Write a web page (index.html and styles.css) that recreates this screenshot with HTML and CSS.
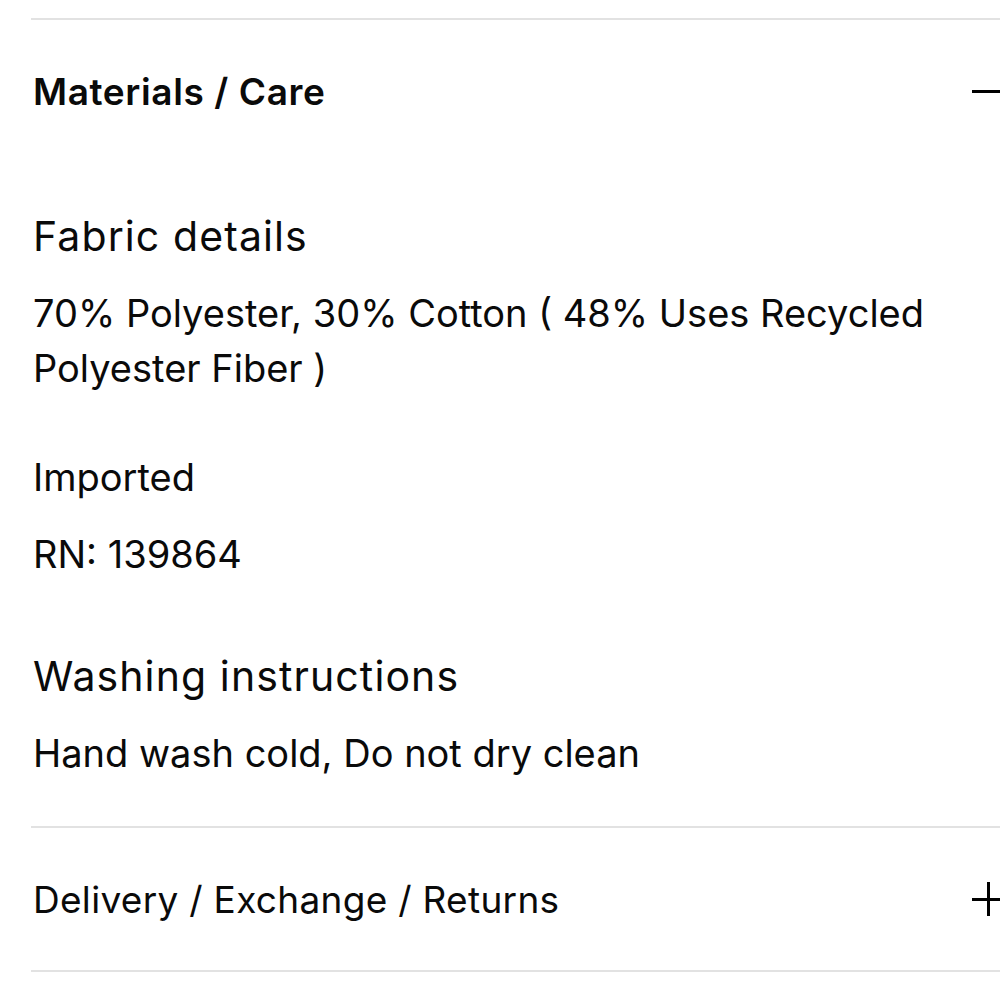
FILE: index.html
```html
<!DOCTYPE html>
<html lang="en">
<head>
<meta charset="utf-8">
<link rel="stylesheet" href="styles.css">
</head>
<body>
<div class="accordion">
  <section class="item open">
    <div class="item-head">
      <h2 class="item-title strong">Materials / Care</h2>
      <span class="toggle minus" aria-hidden="true"></span>
    </div>
    <div class="item-body">
      <h3 class="sub">Fabric details</h3>
      <p class="txt">70% Polyester, 30% Cotton ( 48% Uses Recycled Polyester Fiber )</p>
      <p class="txt gap">Imported</p>
      <p class="txt">RN: 139864</p>
      <h3 class="sub sub2">Washing instructions</h3>
      <p class="txt">Hand wash cold, Do not dry clean</p>
    </div>
  </section>
  <section class="item">
    <div class="item-head">
      <h2 class="item-title">Delivery / Exchange / Returns</h2>
      <span class="toggle plus" aria-hidden="true"></span>
    </div>
  </section>
</div>
</body>
</html>
```
FILE: styles.css
```css
* { box-sizing: border-box; }
html, body { margin: 0; padding: 0; background: #fff; }
body {
  font-family: Inter, "Noto Sans", sans-serif;
  color: #0a0a0a;
  width: 1000px;
  overflow: hidden;
}
.accordion {
  margin-left: 31px;
  padding-top: 18px;
}
.item {
  border-top: 2px solid #e2e2e2;
}
.item:last-child { border-bottom: 2px solid #e2e2e2; }
.item-head {
  display: flex;
  align-items: center;
  justify-content: space-between;
  height: 142px;
  padding-left: 2px;
}
.open .item-head { height: 142px; }
.item-title {
  margin: 0;
  font-size: 37px;
  font-weight: 400;
  letter-spacing: 0.3px;
}
.item-title.strong { font-size: 37px; font-weight: 600; letter-spacing: 0.6px; }
.toggle {
  position: relative;
  width: 34px;
  height: 34px;
  margin-right: -6px;
  flex: none;
}
.toggle::before, .toggle::after {
  content: "";
  position: absolute;
  background: #000;
}
.toggle::before { left: 0; right: 0; top: 16px; height: 3px; }
.plus::after { top: 0; bottom: 0; left: 15px; width: 3px; }
.item-body {
  padding: 46px 0 45px 2px;
}
.sub {
  margin: 0;
  font-size: 41px;
  font-weight: 400;
  line-height: 56px;
  letter-spacing: 1.1px;
}
.sub2 { margin-top: 66px; }
.txt {
  margin: 22px 0 0;
  font-size: 38px;
  line-height: 55px;
  padding-right: 40px;
}
.gap { margin-top: 54px; }
```
